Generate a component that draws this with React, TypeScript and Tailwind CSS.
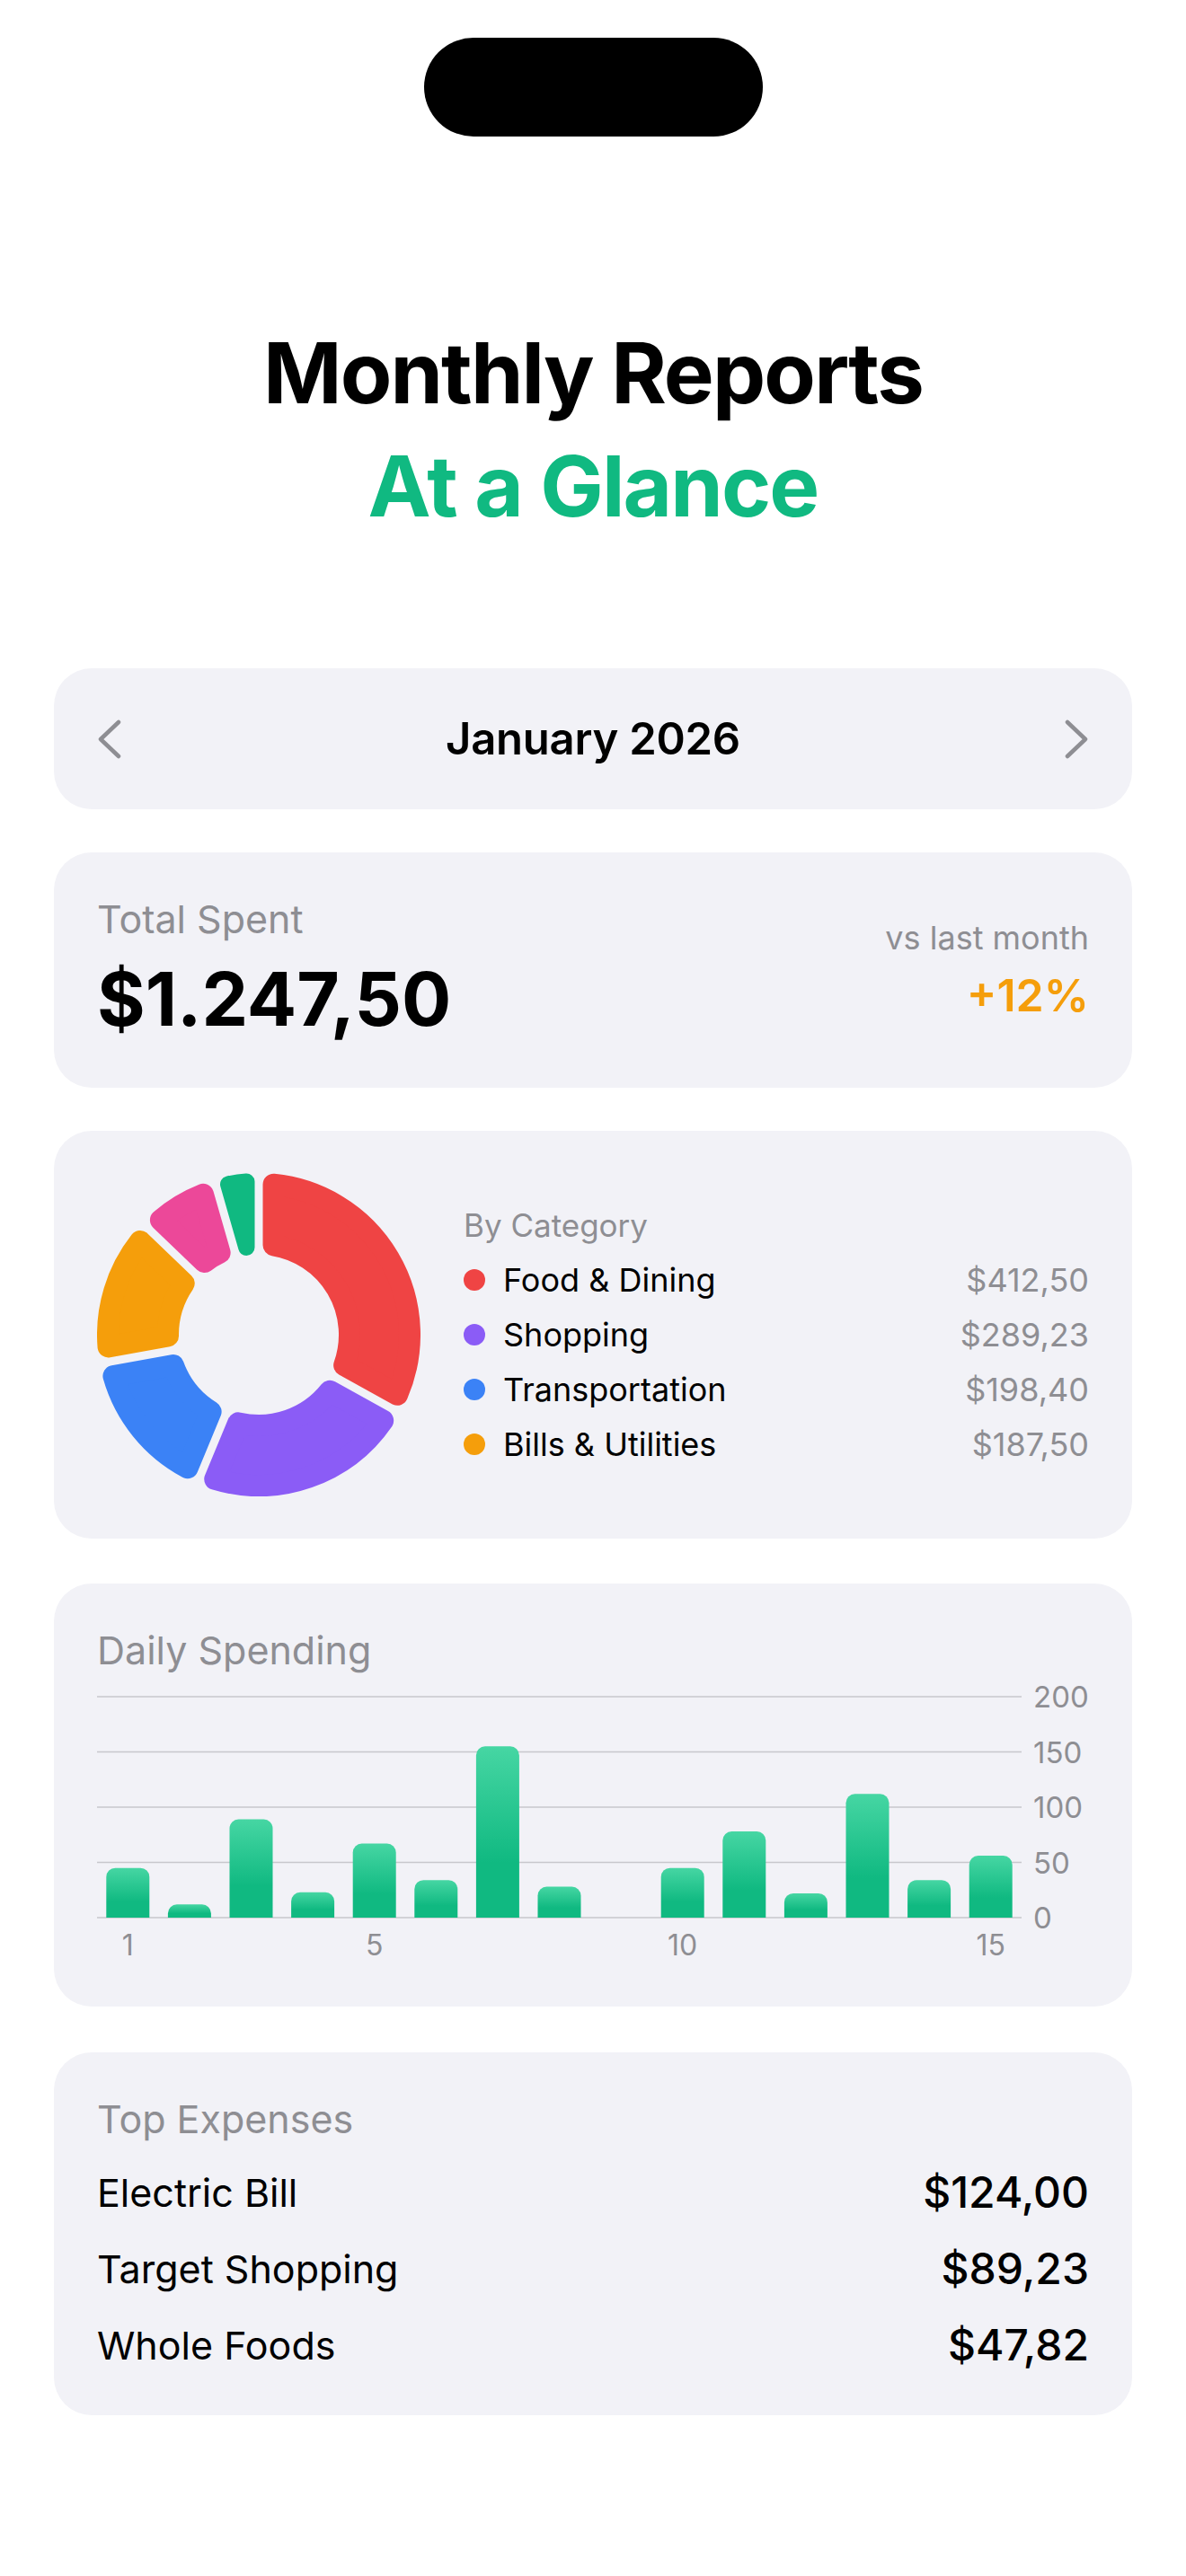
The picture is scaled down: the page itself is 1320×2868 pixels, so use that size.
import React from "react";

const gray = "#8e8e93";

const slices = [
  { name: "Food & Dining", amount: 412.5, label: "$412,50", color: "#ef4444", legend: true },
  { name: "Shopping", amount: 289.23, label: "$289,23", color: "#8b5cf6", legend: true },
  { name: "Transportation", amount: 198.4, label: "$198,40", color: "#3b82f6", legend: true },
  { name: "Bills & Utilities", amount: 187.5, label: "$187,50", color: "#f59e0b", legend: true },
  { name: "Entertainment", amount: 104.37, label: "$104,37", color: "#ec4899", legend: false },
  { name: "Health", amount: 55.5, label: "$55,50", color: "#10b981", legend: false },
];

const daily = [45, 12, 89, 23, 67, 34, 155, 28, 0, 45, 78, 22, 112, 34, 56];

const expenses = [
  { name: "Electric Bill", value: "$124,00" },
  { name: "Target Shopping", value: "$89,23" },
  { name: "Whole Foods", value: "$47,82" },
];

const polar = (rad: number, ang: number) => {
  const x = 180 + rad * Math.sin(ang);
  const y = 180 - rad * Math.cos(ang);
  return `${x.toFixed(2)} ${y.toFixed(2)}`;
};

// rounded annular sector: eroded shape + round-join stroke of 2*cr
const sector = (a1: number, a2: number) => {
  const R = 180;
  const r = 89;
  const gap = 9;
  const s = Math.sin((a2 - a1) / 2);
  const crMax = (s * r - gap / 2) / (1 - s);
  const cr = Math.max(1, Math.min(12, crMax));
  const ro = R - cr;
  const ri = r + cr;
  const d = gap / 2 + cr;
  const oa = Math.asin(d / ro);
  const ia = Math.asin(Math.min(1, d / ri));
  const large = a2 - a1 - 2 * oa > Math.PI ? 1 : 0;
  const path = `M ${polar(ro, a1 + oa)} A ${ro} ${ro} 0 ${large} 1 ${polar(ro, a2 - oa)} L ${polar(
    ri,
    a2 - ia
  )} A ${ri} ${ri} 0 0 0 ${polar(ri, a1 + ia)} Z`;
  return { path, sw: cr * 2 };
};

const Donut = () => {
  const total = slices.reduce((t, s) => t + s.amount, 0);
  let acc = 0;
  return (
    <svg width="360" height="360" viewBox="0 0 360 360" className="shrink-0">
      {slices.map((s) => {
        const a1 = (acc / total) * Math.PI * 2;
        acc += s.amount;
        const a2 = (acc / total) * Math.PI * 2;
        const { path, sw } = sector(a1, a2);
        return (
          <path
            key={s.name}
            d={path}
            fill={s.color}
            stroke={s.color}
            strokeWidth={sw}
            strokeLinejoin="round"
          />
        );
      })}
    </svg>
  );
};

const DailyChart = () => {
  const plotW = 1029;
  const slot = plotW / 15;
  const zero = 271;
  const unit = 246 / 200;
  const barW = 48;
  const rr = 10;
  return (
    <svg width="1104" height="322" viewBox="0 0 1104 322" className="block">
      <defs>
        <linearGradient id="bar" x1="0" y1="0" x2="0" y2="1">
          <stop offset="0%" stopColor="#46d6a3" />
          <stop offset="68%" stopColor="#10b981" />
          <stop offset="100%" stopColor="#10b981" />
        </linearGradient>
      </defs>
      {[200, 150, 100, 50, 0].map((v) => {
        const y = zero - v * unit;
        return (
          <g key={v}>
            <line x1="0" x2={plotW} y1={y} y2={y} stroke="#c7c7cc" strokeWidth="1.6" />
            <text x="1042" y={y + 12} fontSize="33" fill={gray}>
              {v}
            </text>
          </g>
        );
      })}
      {daily.map((v, i) => {
        if (!v) return null;
        const h = v * unit;
        const x = (i + 0.5) * slot - barW / 2;
        const yt = zero - h;
        const r = Math.min(rr, h);
        const d = `M ${x} ${zero} L ${x} ${yt + r} A ${r} ${r} 0 0 1 ${x + r} ${yt} L ${
          x + barW - r
        } ${yt} A ${r} ${r} 0 0 1 ${x + barW} ${yt + r} L ${x + barW} ${zero} Z`;
        return <path key={i} d={d} fill="url(#bar)" />;
      })}
      {[1, 5, 10, 15].map((n) => (
        <text key={n} x={(n - 0.5) * slot} y="313" fontSize="32" fill={gray} textAnchor="middle">
          {n}
        </text>
      ))}
    </svg>
  );
};

const Chevron = ({ dir }: { dir: "left" | "right" }) => (
  <svg width="26" height="46" viewBox="0 0 26 46">
    <polyline
      points={dir === "left" ? "23,4 3,23 23,42" : "3,4 23,23 3,42"}
      fill="none"
      stroke={gray}
      strokeWidth="4.5"
      strokeLinecap="round"
      strokeLinejoin="round"
    />
  </svg>
);

const App = () => {
  return (
    <div className="min-h-[2868px] w-full bg-white font-[Inter,sans-serif] text-black flex flex-col items-center">
      <div className="mt-[42px] h-[110px] w-[377px] rounded-full bg-black" />

      <div className="mt-[200px] text-center text-[94px] leading-[126px] font-bold tracking-[-0.02em]">
        <div>Monthly Reports</div>
        <div className="text-[#10b981]">At a Glance</div>
      </div>

      <div className="mt-[140px] w-[1200px] flex flex-col">
        <div className="h-[157px] rounded-[42px] bg-[#f2f2f7] flex items-center justify-between px-[49px]">
          <Chevron dir="left" />
          <div className="text-[49px] font-semibold tracking-[-0.005em]">January 2026</div>
          <Chevron dir="right" />
        </div>

        <div className="mt-[48px] rounded-[42px] bg-[#f2f2f7] p-[48px] flex items-center justify-between">
          <div>
            <div className="text-[43px] leading-[53px] text-[#8e8e93]">Total Spent</div>
            <div className="mt-[13px] text-[82px] leading-[100px] font-bold">$1.247,50</div>
          </div>
          <div className="flex flex-col items-end">
            <div className="text-[36px] leading-[42px] text-[#8e8e93]">vs last month</div>
            <div className="mt-[13px] text-[50px] leading-[60px] font-semibold text-[#f59e0b]">
              +12%
            </div>
          </div>
        </div>

        <div className="mt-[48px] rounded-[42px] bg-[#f2f2f7] px-[48px] py-[47px] flex items-center gap-[48px]">
          <Donut />
          <div className="flex-1 flex flex-col text-[36px]">
            <div className="h-[61px] flex items-center text-[35px] text-[#8e8e93]">By Category</div>
            {slices
              .filter((s) => s.legend)
              .map((s) => (
                <div key={s.name} className="h-[61px] flex items-center">
                  <span
                    className="h-[24px] w-[24px] rounded-full shrink-0"
                    style={{ backgroundColor: s.color }}
                  />
                  <span className="ml-[20px] flex-1">{s.name}</span>
                  <span className="text-[#8e8e93]">{s.label}</span>
                </div>
              ))}
          </div>
        </div>

        <div className="mt-[50px] rounded-[42px] bg-[#f2f2f7] p-[48px]">
          <div className="text-[43px] leading-[53px] text-[#8e8e93]">Daily Spending</div>
          <DailyChart />
        </div>

        <div className="mt-[51px] rounded-[42px] bg-[#f2f2f7] p-[48px] flex flex-col gap-[25px]">
          <div className="text-[43px] leading-[53px] text-[#8e8e93]">Top Expenses</div>
          {expenses.map((e) => (
            <div key={e.name} className="h-[60px] flex items-center justify-between">
              <span className="text-[43px]">{e.name}</span>
              <span className="text-[48px] font-medium">{e.value}</span>
            </div>
          ))}
        </div>
      </div>
    </div>
  );
};

export default App;
